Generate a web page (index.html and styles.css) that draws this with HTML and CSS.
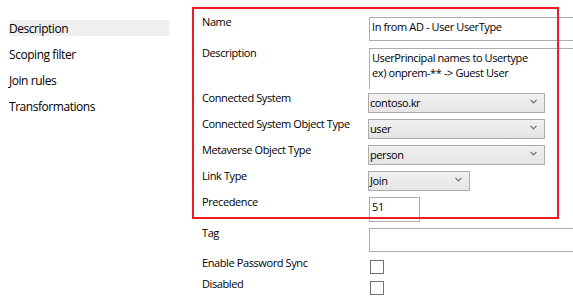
FILE: index.html
```html
<!DOCTYPE html>
<html>
<head>
<meta charset="utf-8">
<link rel="stylesheet" href="styles.css">
</head>
<body>
<div class="page">
  <nav class="nav">
    <div class="nav-item active">Description</div>
    <div class="nav-item">Scoping filter</div>
    <div class="nav-item">Join rules</div>
    <div class="nav-item">Transformations</div>
  </nav>
  <form class="form">
    <div class="label">Name</div>
    <div class="textbox name-box">In from AD - User UserType</div>

    <div class="label">Description</div>
    <div class="textbox desc-box">UserPrincipal names to Usertype<br>ex) onprem-** -&gt; Guest User</div>

    <div class="label">Connected System</div>
    <div class="combo wide"><span>contoso.kr</span><svg class="chev" width="7" height="5" viewBox="0 0 7 5"><path d="M0.5 0.8 L3.5 3.8 L6.5 0.8" fill="none" stroke="#6d6d6d" stroke-width="1.2"/></svg></div>

    <div class="label">Connected System Object Type</div>
    <div class="combo wide"><span>user</span><svg class="chev" width="7" height="5" viewBox="0 0 7 5"><path d="M0.5 0.8 L3.5 3.8 L6.5 0.8" fill="none" stroke="#6d6d6d" stroke-width="1.2"/></svg></div>

    <div class="label">Metaverse Object Type</div>
    <div class="combo wide"><span>person</span><svg class="chev" width="7" height="5" viewBox="0 0 7 5"><path d="M0.5 0.8 L3.5 3.8 L6.5 0.8" fill="none" stroke="#6d6d6d" stroke-width="1.2"/></svg></div>

    <div class="label">Link Type</div>
    <div class="combo narrow"><span>Join</span><svg class="chev" width="7" height="5" viewBox="0 0 7 5"><path d="M0.5 0.8 L3.5 3.8 L6.5 0.8" fill="none" stroke="#6d6d6d" stroke-width="1.2"/></svg></div>

    <div class="label">Precedence</div>
    <div class="textbox prec-box">51</div>

    <div class="label">Tag</div>
    <div class="textbox tag-box"></div>

    <div class="label">Enable Password Sync</div>
    <div class="check"></div>

    <div class="label">Disabled</div>
    <div class="check"></div>
  </form>
  <div class="highlight"></div>
</div>
</body>
</html>
```

FILE: styles.css
```css
html, body {
  margin: 0;
  padding: 0;
  background: #ffffff;
}

body {
  font-family: "Open Sans", "Noto Sans", sans-serif;
  color: #000000;
  overflow: hidden;
}

.page {
  position: relative;
  display: flex;
  width: 573px;
  height: 307px;
}

.nav {
  width: 192px;
  flex: none;
  padding: 20px 0 0 9px;
  box-sizing: border-box;
  display: flex;
  flex-direction: column;
  gap: 10px;
}

.nav-item {
  width: 160px;
  height: 16px;
  line-height: 17px;
  font-size: 12px;
  letter-spacing: -0.45px;
  white-space: nowrap;
}

.nav-item.active {
  background: #efefef;
}

.form {
  flex: 1;
  margin: 0;
  padding: 17px 0 0 10px;
  display: grid;
  grid-template-columns: 166px 1fr;
  grid-template-rows: 31px 45px 26px 26px 26px 26px 31px 30px 21px 21px;
  align-items: start;
  font-size: 11px;
  letter-spacing: -0.4px;
}

.label {
  line-height: 16px;
  margin-top: -3px;
  white-space: nowrap;
}

.textbox {
  box-sizing: border-box;
  border: 1px solid #abadb3;
  background: #fff;
  margin-left: 1px;
  padding: 0 2px;
  line-height: 16px;
  white-space: nowrap;
}

.name-box {
  height: 24px;
  width: 220px;
  padding-top: 1px;
}

.desc-box {
  height: 41px;
  width: 220px;
  border-bottom: none;
  line-height: 15px;
  padding-top: 1px;
}

.prec-box {
  height: 25px;
  width: 51px;
  padding-top: 1px;
}

.tag-box {
  height: 24px;
  width: 220px;
}

.combo {
  box-sizing: border-box;
  height: 20px;
  border: 1px solid #acacac;
  background: linear-gradient(#f0f0f0, #e5e5e5);
  padding: 1px 7px 0 1px;
  line-height: 15px;
  display: flex;
  justify-content: space-between;
  align-items: flex-start;
}

.combo.wide {
  width: 177px;
}

.combo.narrow {
  width: 102px;
}

.chev {
  margin-top: 4px;
}

.check {
  box-sizing: border-box;
  width: 14px;
  height: 14px;
  border: 1px solid #707070;
  background: #fff;
  margin: 2px 0 0 2px;
}

.highlight {
  position: absolute;
  left: 192px;
  top: 7px;
  width: 367px;
  height: 212px;
  box-sizing: border-box;
  border: 2px solid #ed1c24;
  pointer-events: none;
}
```
